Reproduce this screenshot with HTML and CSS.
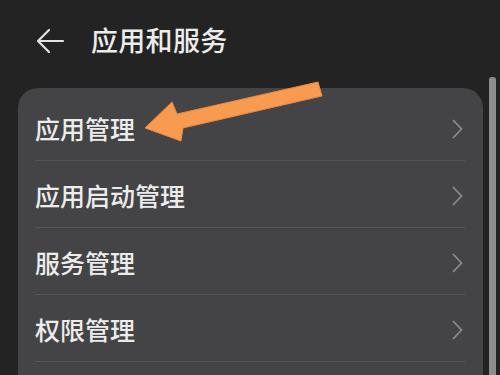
FILE: index.html
```html
<!DOCTYPE html>
<html lang="zh-CN">
<head>
<meta charset="utf-8">
<title>应用和服务</title>
<link rel="stylesheet" href="styles.css">
</head>
<body>
<div class="screen">
  <header class="header">
    <svg class="back" width="30" height="26" viewBox="0 0 30 26">
      <path d="M28 13 H3 M14 2 L3 13 L14 24" fill="none" stroke="#e2e2e2" stroke-width="2.2" stroke-linecap="round" stroke-linejoin="round"/>
    </svg>
    <h1 class="title">应用和服务</h1>
  </header>
  <main class="content">
    <ul class="card">
      <li class="row"><span class="label">应用管理</span><svg class="chev" width="12" height="20" viewBox="0 0 12 20"><path d="M2 1 L10.5 10 L2 19" fill="none" stroke="#8a8a8c" stroke-width="1.8"/></svg></li>
      <li class="row"><span class="label">应用启动管理</span><svg class="chev" width="12" height="20" viewBox="0 0 12 20"><path d="M2 1 L10.5 10 L2 19" fill="none" stroke="#8a8a8c" stroke-width="1.8"/></svg></li>
      <li class="row"><span class="label">服务管理</span><svg class="chev" width="12" height="20" viewBox="0 0 12 20"><path d="M2 1 L10.5 10 L2 19" fill="none" stroke="#8a8a8c" stroke-width="1.8"/></svg></li>
      <li class="row"><span class="label">权限管理</span><svg class="chev" width="12" height="20" viewBox="0 0 12 20"><path d="M2 1 L10.5 10 L2 19" fill="none" stroke="#8a8a8c" stroke-width="1.8"/></svg></li>
      <li class="row"><span class="label"></span></li>
    </ul>
  </main>
  <div class="scrollbar"></div>
  <svg class="pointer" width="500" height="375" viewBox="0 0 500 375">
    <polygon points="145,128 172,102 177,114 318,82 322,96 183,128 181,141" fill="#f89a50" stroke="#e9893f" stroke-width="1" stroke-linejoin="round"/>
  </svg>
</div>
</body>
</html>
```

FILE: styles.css
```css
* { box-sizing: border-box; }
html, body {
  margin: 0;
  padding: 0;
  background: #232323;
}
body {
  font-family: "Noto Sans CJK SC", "Noto Sans", sans-serif;
  color: #ececec;
  overflow: hidden;
}
.screen {
  position: relative;
  width: 500px;
  height: 375px;
  overflow: hidden;
  background: #232323;
}
.header {
  height: 88px;
  display: flex;
  align-items: center;
  padding-left: 35px;
  padding-bottom: 9px;
}
.back {
  display: block;
  margin-top: 2px;
}
.title {
  margin: 0 0 0 26px;
  font-size: 27px;
  font-weight: 500;
  line-height: 1;
  color: #ececec;
  letter-spacing: 0.3px;
}
.content {
  display: flex;
  padding-left: 18px;
}
.card {
  list-style: none;
  margin: 0;
  width: 465px;
  padding: 6px 18px 0 17px;
  background: #444446;
  border-radius: 20px 20px 0 0;
  height: 300px;
}
.row {
  height: 67px;
  display: flex;
  align-items: center;
  justify-content: space-between;
  padding-top: 3px;
  border-bottom: 1px solid #555558;
}
.label {
  font-size: 25px;
  font-weight: 500;
  color: #ececec;
  line-height: 1;
}
.chev {
  display: block;
  margin-right: 2px;
}
.scrollbar {
  position: absolute;
  left: 489px;
  top: 77px;
  width: 7px;
  height: 310px;
  background: #8d8d8d;
  border-radius: 3px 3px 0 0;
}
.pointer {
  position: absolute;
  left: 0;
  top: 0;
  pointer-events: none;
}
```
